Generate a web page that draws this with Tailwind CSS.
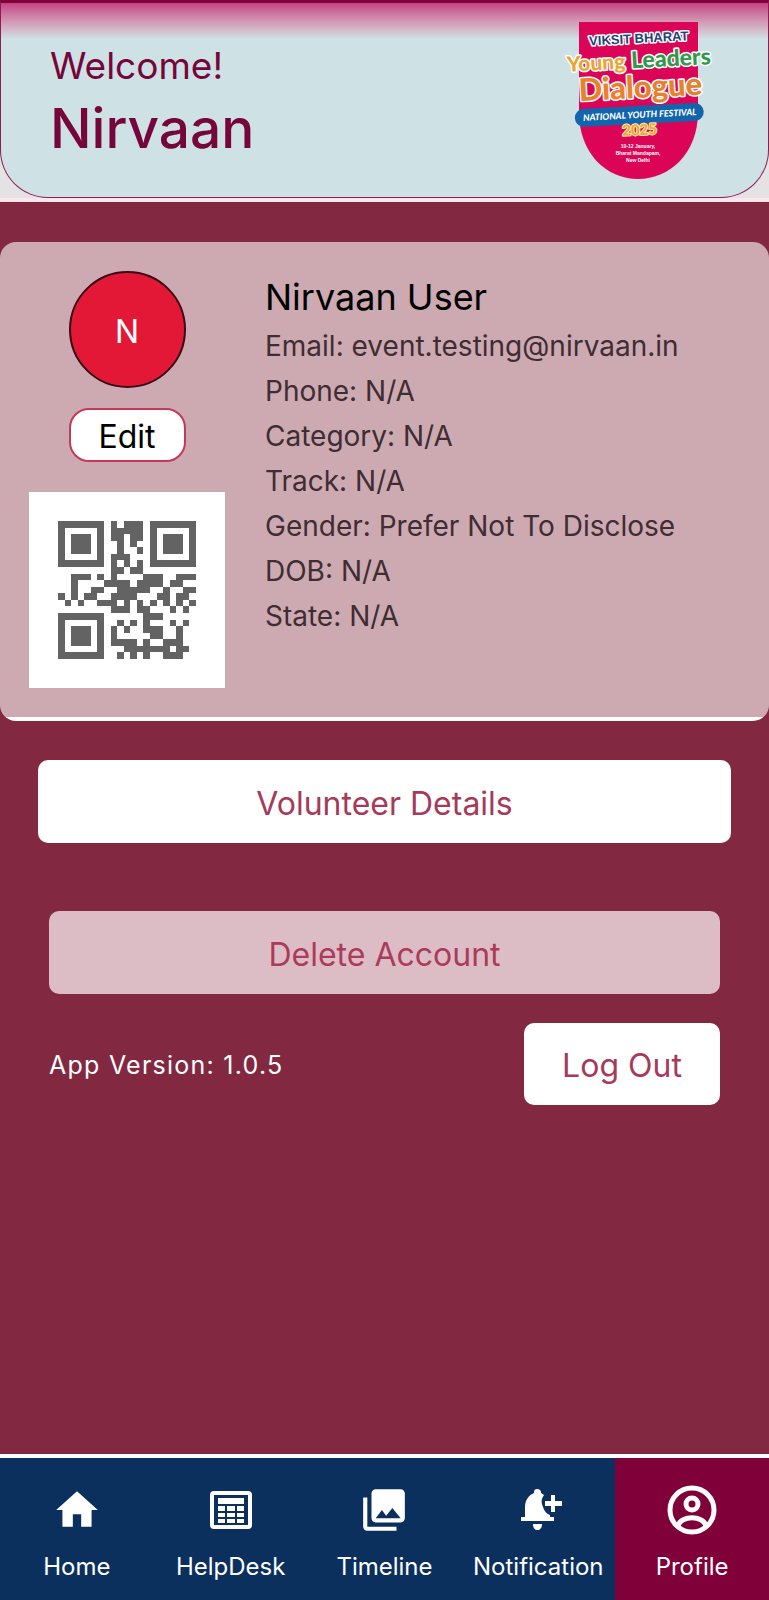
<!DOCTYPE html>
<html lang="en">
<head>
<meta charset="utf-8">
<meta name="viewport" content="width=device-width, initial-scale=1">
<title>Profile</title>
<script src="https://cdn.jsdelivr.net/npm/@tailwindcss/browser@4"></script>
</head>
<body class="flex min-h-screen flex-col bg-[#822840] font-['Inter','Liberation_Sans',sans-serif]">

<header class="border-b-4 border-[#fce6ec] bg-[#e4e2e5]">
  <div class="flex h-[198px] items-start justify-between rounded-b-[48px] border border-t-3 border-[#8c1c52] border-t-[#80003a] bg-[#cee1e4] bg-linear-to-b from-[#c54284] to-[#cee1e4] to-[36px] pt-[17px] pr-[53px] pl-[49px]">
    <div class="pt-[22px] text-[#75053a]">
      <p class="text-[37px] leading-[48px]">Welcome!</p>
      <h1 class="text-[55px] leading-[76px] font-medium">Nirvaan</h1>
    </div>
    <svg class="h-[162px] w-[150px] shrink-0" viewBox="565 20 150 162" role="img" aria-label="Viksit Bharat Young Leaders Dialogue, National Youth Festival 2025">
      <path d="M579 22H698V112C698 153 670 179 638 179S579 153 579 112Z" fill="#dc0456"/>
      <g transform="rotate(-3 638 100)" text-anchor="middle" paint-order="stroke" stroke-linejoin="round" font-weight="700">
        <text x="642" y="43" font-family="Liberation Sans, sans-serif" font-size="13" fill="#1c4276" stroke="#fff" stroke-width="3">VIKSIT BHARAT</text>
        <g font-family="Lato, sans-serif" font-weight="900" stroke="#fff" stroke-width="3">
          <text x="598" y="68" font-size="21" fill="#e9a534">Young</text>
          <text x="673" y="68" font-size="23" fill="#2f9b4a">Leaders</text>
          <text x="641" y="98" font-size="31" fill="#e8812c">Dialogue</text>
        </g>
        <rect x="574" y="106" width="129" height="18" rx="9" fill="#1264ad"/>
        <text x="639" y="118" font-family="Lato, sans-serif" font-style="italic" font-weight="900" font-size="9" fill="#fff">NATIONAL YOUTH FESTIVAL</text>
        <text x="638" y="135" font-family="Lato, sans-serif" font-weight="900" font-size="15" fill="#efa92f" stroke="#fff1b8" stroke-width="2">2025</text>
      </g>
      <g fill="#fff" font-family="Liberation Sans, sans-serif" font-size="5" font-weight="700" text-anchor="middle">
        <text x="638" y="148">10-12 January,</text>
        <text x="638" y="155">Bharat Mandapam,</text>
        <text x="638" y="162">New Delhi</text>
      </g>
    </svg>
  </div>
</header>

<main class="flex-1 pt-10">
  <section class="flex gap-10 rounded-2xl bg-[linear-gradient(to_top,#fff_4px,#cda9b2_4px)] px-[29px] pt-[29px] pb-[33px]">
    <div class="flex w-[196px] shrink-0 flex-col items-center">
      <div class="flex size-[117px] items-center justify-center rounded-full border-2 border-[#3a0a14] bg-[#e31836] pt-1 text-[32px] text-white">N</div>
      <button type="button" class="mt-5 h-[54px] w-[117px] rounded-[20px] border-2 border-[#c23a58] bg-white pt-1 text-[32px] leading-[46px] text-black">Edit</button>
      <div class="mt-[30px] bg-white p-[29px]">
        <svg class="size-[138px]" viewBox="0 0 21 21" shape-rendering="crispEdges" role="img" aria-label="Profile QR code">
          <g fill="none" stroke="#636363">
            <path d="M.5.5h6v6h-6zM14.5.5h6v6h-6zM.5 14.5h6v6h-6z"/>
          </g>
          <path fill="#636363" d="M2 2h3v3h-3zM16 2h3v3h-3zM2 16h3v3h-3z
            M8 0h1v1h-1zM10 0h3v1h-3z
            M8 1h5v1h-5z
            M8 2h2v1h-2zM11 2h2v1h-2z
            M9 3h1v1h-1zM11 3h1v1h-1z
            M9 4h1v1h-1zM12 4h1v1h-1z
            M8 5h3v1h-3z
            M8 6h1v1h-1zM10 6h1v1h-1zM12 6h1v1h-1z
            M8 7h2v1h-2zM11 7h2v1h-2z
            M2 8h3v1h-3zM6 8h1v1h-1zM8 8h1v1h-1zM13 8h3v1h-3zM18 8h3v1h-3z
            M2 9h1v1h-1zM7 9h4v1h-4zM12 9h4v1h-4zM17 9h2v1h-2z
            M2 10h1v1h-1zM5 10h2v1h-2zM9 10h5v1h-5zM16 10h1v1h-1zM19 10h2v1h-2z
            M0 11h1v1h-1zM2 11h1v1h-1zM4 11h2v1h-2zM8 11h4v1h-4zM15 11h2v1h-2zM18 11h2v1h-2z
            M1 12h1v1h-1zM3 12h1v1h-1zM6 12h3v1h-3zM10 12h1v1h-1zM12 12h1v1h-1zM14 12h1v1h-1zM16 12h1v1h-1zM18 12h1v1h-1zM20 12h1v1h-1z
            M8 13h3v1h-3zM12 13h2v1h-2zM17 13h1v1h-1zM19 13h1v1h-1z
            M13 14h3v1h-3z
            M9 15h1v1h-1zM11 15h1v1h-1zM13 15h1v1h-1zM17 15h1v1h-1zM19 15h1v1h-1z
            M8 16h1v1h-1zM10 16h1v1h-1zM13 16h3v1h-3zM18 16h1v1h-1z
            M8 17h1v1h-1zM14 17h2v1h-2zM18 17h1v1h-1z
            M8 18h4v1h-4zM13 18h1v1h-1zM16 18h3v1h-3z
            M10 19h7v1h-7zM18 19h2v1h-2z
            M9 20h1v1h-1zM11 20h1v1h-1zM13 20h1v1h-1zM16 20h3v1h-3z"/>
        </svg>
      </div>
    </div>
    <div class="text-[28px] leading-[45px] text-[#3e2d32]">
      <h2 class="text-[36px] leading-[53px] text-black">Nirvaan User</h2>
      <p>Email: event.testing@nirvaan.in</p>
      <p>Phone: N/A</p>
      <p>Category: N/A</p>
      <p>Track: N/A</p>
      <p>Gender: Prefer Not To Disclose</p>
      <p>DOB: N/A</p>
      <p>State: N/A</p>
    </div>
  </section>

  <div class="mt-[39px] px-[38px]">
    <button type="button" class="h-[83px] w-full rounded-[10px] bg-white pt-1 text-[32px] text-[#a53a59]">Volunteer Details</button>
  </div>

  <div class="mt-[68px] px-[49px]">
    <button type="button" class="h-[83px] w-full rounded-[10px] bg-[#dcbdc6] pt-1 text-[32px] text-[#ac3a5a]">Delete Account</button>
    <div class="mt-[29px] flex items-center justify-between">
      <p class="pt-1 text-[25px] tracking-wider text-white">App Version: 1.0.5</p>
      <button type="button" class="h-[82px] w-[196px] rounded-[10px] bg-white pt-1 text-[32px] text-[#a53a59]">Log Out</button>
    </div>
  </div>
</main>

<nav aria-label="Main" class="grid grid-cols-5 border-t-4 border-white bg-[#0c305d] text-[24px] leading-[30px] text-white">
  <a href="#home" class="flex h-[142px] flex-col items-center gap-[17px] pt-[27px]">
    <svg class="size-[50px]" viewBox="0 0 24 24" fill="currentColor" aria-hidden="true"><path d="M10 20v-6h4v6h5v-8h3L12 3 2 12h3v8z"/></svg>
    Home
  </a>
  <a href="#helpdesk" class="flex h-[142px] flex-col items-center gap-[17px] pt-[27px]">
    <svg class="size-[50px]" viewBox="0 0 50 50" aria-hidden="true">
      <rect x="6" y="8" width="38" height="34" rx="2" fill="none" stroke="currentColor" stroke-width="4"/>
      <path fill="currentColor" d="M12 13h26v6H12zM12 21h7v5h-7zM21 21h8v5h-8zM31 21h7v5h-7zM12 28h7v4h-7zM21 28h8v4h-8zM31 28h7v4h-7zM12 34h7v4h-7zM21 34h8v4h-8zM31 34h7v4h-7z"/>
    </svg>
    HelpDesk
  </a>
  <a href="#timeline" class="flex h-[142px] flex-col items-center gap-[17px] pt-[27px]">
    <svg class="size-[50px]" viewBox="0 0 24 24" fill="currentColor" aria-hidden="true"><path d="M22 16V4c0-1.100-.9-2-2-2H8c-1.100 0-2 .9-2 2v12c0 1.100.9 2 2 2h12c1.100 0 2-.9 2-2zm-11-4l2.030 2.710L16 11l4 5H8l3-4zM2 6v14c0 1.100.9 2 2 2h14v-2H4V6H2z"/></svg>
    Timeline
  </a>
  <a href="#notification" class="flex h-[142px] flex-col items-center gap-[17px] pt-[27px]">
    <svg class="size-[50px]" viewBox="0 0 50 50" fill="currentColor" aria-hidden="true">
      <path d="M8 36V32H12V22C12 15 16 10 21 8V7C21 5 22 4 24 4S28 5 28 7V8L31 10C28 14 28 18 30 22C31 26 34 29 37 30V32H41V36ZM20 39H29C29 43 27 45 24.500 45S20 43 20 39Z"/>
      <path d="M38 10H42V16H49V21H42V27H38V21H32V16H38Z"/>
    </svg>
    Notification
  </a>
  <a href="#profile" aria-current="page" class="flex h-[142px] flex-col items-center gap-[17px] bg-[#80003a] pt-[27px]">
    <svg class="size-[50px]" viewBox="0 0 50 50" fill="none" stroke="currentColor" stroke-width="5" aria-hidden="true">
      <circle cx="25" cy="25" r="22"/>
      <circle cx="25" cy="19" r="6"/>
      <path d="M11 41C14 30 36 30 39 41"/>
    </svg>
    Profile
  </a>
</nav>
</body>
</html>
